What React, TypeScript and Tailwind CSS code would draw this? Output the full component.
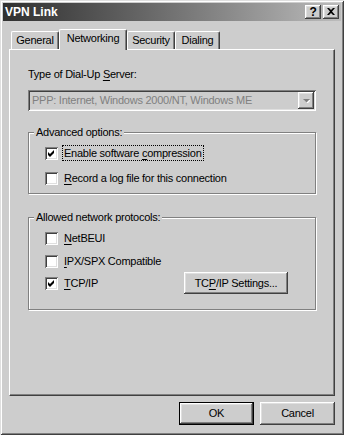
import React from 'react';

const RAISED =
  'shadow-[inset_-1px_-1px_0_#404040,inset_1px_1px_0_#ffffff,inset_-2px_-2px_0_#808080,inset_2px_2px_0_#dfdfdf]';
const SUNKEN =
  'shadow-[inset_1px_1px_0_#808080,inset_-1px_-1px_0_#ffffff,inset_2px_2px_0_#404040,inset_-2px_-2px_0_#dfdfdf]';

function Mn({ children }: { children: React.ReactNode }) {
  return <span className="underline underline-offset-[2px]">{children}</span>;
}

function CheckBox({ checked }: { checked?: boolean }) {
  return (
    <div className={`w-[13px] h-[13px] bg-white shrink-0 flex items-center justify-center ${SUNKEN}`}>
      {checked && (
        <svg width="7" height="7" viewBox="0 0 7 7">
          <path d="M0 2 L2 4 L6 0 L6 3 L2 7 L0 5 Z" fill="#000" />
        </svg>
      )}
    </div>
  );
}

function CheckRow({
  checked,
  children,
  focused,
}: {
  checked?: boolean;
  children: React.ReactNode;
  focused?: boolean;
}) {
  return (
    <div className="flex items-center h-[16px]">
      <CheckBox checked={checked} />
      <span
        className={`ml-[4px] px-[1px] leading-[14px] border ${
          focused ? 'border-dotted border-black' : 'border-transparent'
        }`}
      >
        {children}
      </span>
    </div>
  );
}

function GroupBox({
  label,
  className,
  children,
}: {
  label: string;
  className: string;
  children: React.ReactNode;
}) {
  return (
    <div
      className={`relative border border-[#808080] shadow-[inset_1px_1px_0_#ffffff,1px_1px_0_#ffffff] pl-[16px] pt-[12px] ${className}`}
    >
      <span className="absolute -top-[7px] left-[5px] px-[2px] bg-[#cdcdcd] leading-[13px]">{label}</span>
      {children}
    </div>
  );
}

function Tab({ label, active, width }: { label: string; active?: boolean; width: string }) {
  return (
    <div
      className={`${width} flex items-center justify-center rounded-t-[2px] border-t border-l border-r border-t-white border-l-white border-r-[#404040] shadow-[inset_-1px_0_0_#808080] bg-[#cdcdcd] ${
        active ? 'h-[21px] -mb-[1px] relative z-10 pb-[3px]' : 'h-[18px]'
      }`}
    >
      {label}
    </div>
  );
}

export default function App() {
  return (
    <div className="w-[344px] h-[435px] bg-[#cdcdcd] p-[3px] flex flex-col text-[11px] tracking-[-0.25px] text-black font-['Liberation_Sans',Arial,sans-serif] shadow-[inset_1px_1px_0_#dfdfdf,inset_-1px_-1px_0_#404040,inset_2px_2px_0_#ffffff,inset_-2px_-2px_0_#808080]">
      {/* title bar */}
      <div className="h-[18px] flex items-center justify-between pl-[2px] pr-[2px] bg-linear-to-r from-[#303030] to-[#bcbcbc]">
        <span className="text-white font-bold text-[12px] tracking-normal">VPN Link</span>
        <div className="flex gap-[2px]">
          <div className={`w-[16px] h-[14px] bg-[#cdcdcd] flex items-center justify-center font-bold text-[12px] leading-none pb-[1px] ${RAISED}`}>
            ?
          </div>
          <div className={`w-[16px] h-[14px] bg-[#cdcdcd] flex items-center justify-center pb-[1px] ${RAISED}`}>
            <svg width="8" height="7" viewBox="0 0 8 7">
              <path d="M0 0 H2 L4 2 L6 0 H8 L5 3.5 L8 7 H6 L4 5 L2 7 H0 L3 3.5 Z" fill="#000" />
            </svg>
          </div>
        </div>
      </div>

      {/* tabs */}
      <div className="mt-[8px] h-[20px] flex items-end pl-[8px]">
        <Tab label="General" width="w-[48px]" />
        <Tab label="Networking" width="w-[68px]" active />
        <Tab label="Security" width="w-[48px]" />
        <Tab label="Dialing" width="w-[45px]" />
      </div>

      {/* panel */}
      <div className="mx-[6px] h-[347px] border border-white border-r-[#404040] border-b-[#404040] shadow-[inset_-1px_-1px_0_#808080] px-[18px] pt-[18px] flex flex-col">
        <div className="leading-[13px]">
          Type of Dial-Up <Mn>S</Mn>erver:
        </div>
        <div className={`mt-[9px] h-[21px] flex items-center justify-between pl-[4px] pr-[2px] text-[#808080] ${SUNKEN}`}>
          <span>PPP: Internet, Windows 2000/NT, Windows ME</span>
          <div className={`w-[16px] h-[17px] flex items-center justify-center ${RAISED}`}>
            <svg width="7" height="4" viewBox="0 0 7 4">
              <path d="M1 1 H8 L4.5 4.5 Z" fill="#ffffff" />
              <path d="M0 0 H7 L3.5 3.5 Z" fill="#808080" />
            </svg>
          </div>
        </div>

        <GroupBox label="Advanced options:" className="mt-[21px] h-[62px]">
          <CheckRow checked focused>
            Enable software <Mn>c</Mn>ompression
          </CheckRow>
          <div className="mt-[9px]">
            <CheckRow>
              <Mn>R</Mn>ecord a log file for this connection
            </CheckRow>
          </div>
        </GroupBox>

        <GroupBox label="Allowed network protocols:" className="mt-[23px] h-[93px]">
          <CheckRow>
            <Mn>N</Mn>etBEUI
          </CheckRow>
          <div className="mt-[7px]">
            <CheckRow>
              <Mn>I</Mn>PX/SPX Compatible
            </CheckRow>
          </div>
          <div className="mt-[3px] h-[22px] flex items-center">
            <div className="w-[139px]">
              <CheckRow checked>
                <Mn>T</Mn>CP/IP
              </CheckRow>
            </div>
            <div className={`w-[104px] h-[22px] flex items-center justify-center ${RAISED}`}>
              TC<Mn>P</Mn>/IP Settings...
            </div>
          </div>
        </GroupBox>
      </div>

      {/* bottom buttons */}
      <div className="mt-[6px] flex justify-end gap-[6px] pr-[6px]">
        <div className="w-[75px] h-[23px] border border-black">
          <div className={`w-full h-full flex items-center justify-center ${RAISED}`}>OK</div>
        </div>
        <div className={`w-[75px] h-[23px] flex items-center justify-center ${RAISED}`}>Cancel</div>
      </div>
    </div>
  );
}
